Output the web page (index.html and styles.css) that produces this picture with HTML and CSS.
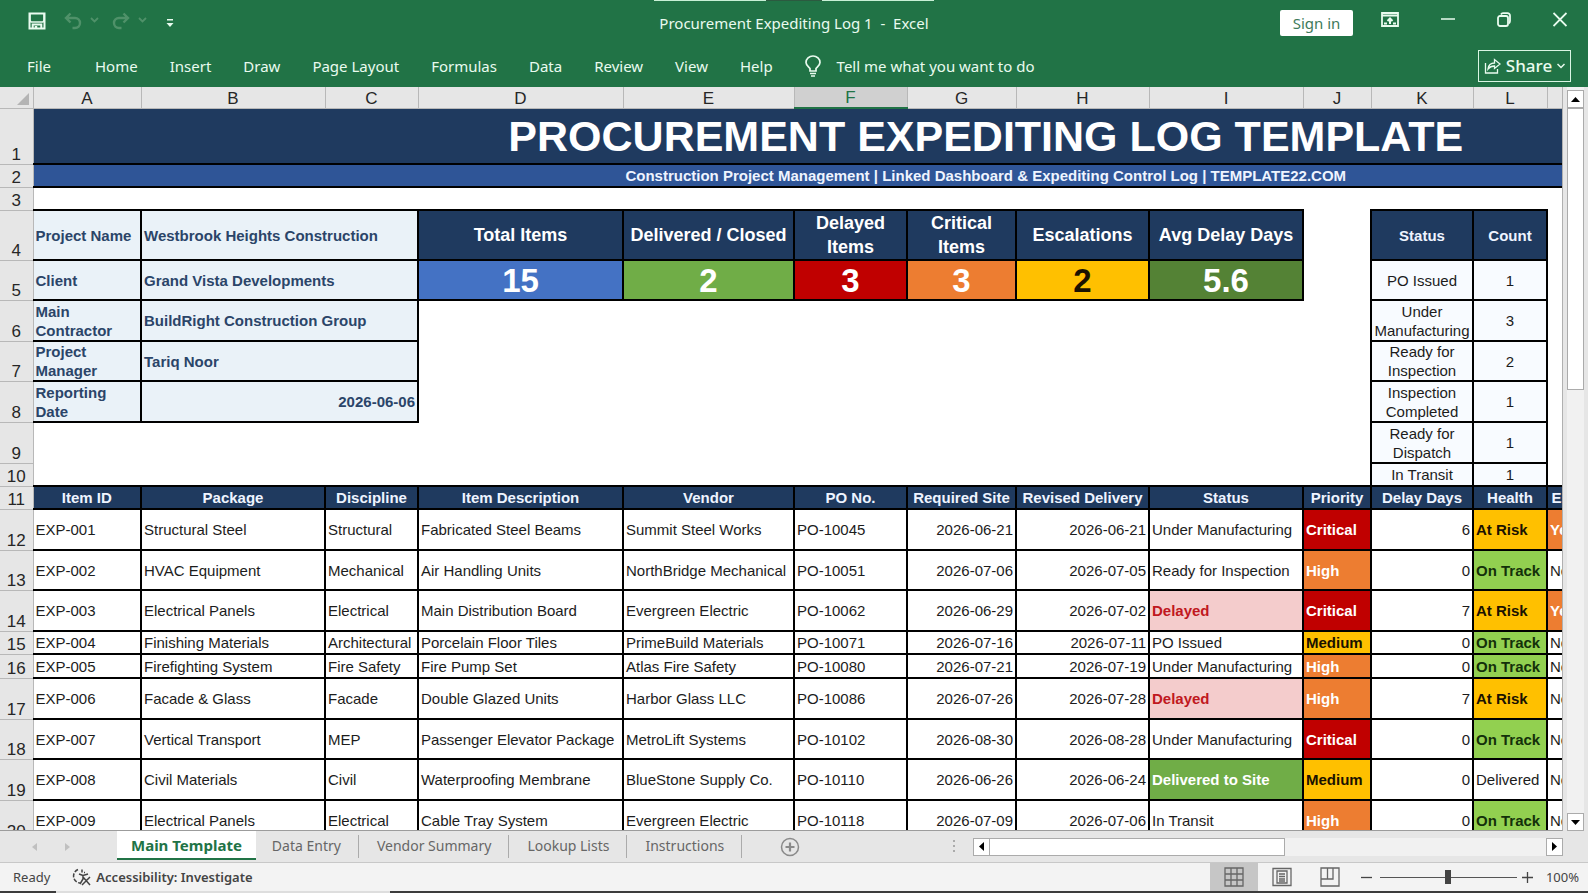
FILE: index.html
```
<!DOCTYPE html>
<html lang="en">
<head>
<meta charset="utf-8">
<title>Procurement Expediting Log 1 - Excel</title>
<link rel="stylesheet" href="styles.css">
</head>
<body>
<div class="app">
  <header class="ribbon">
    <div class="peek"></div>
    <div class="titlebar">
      <div class="quick">
        <button class="icon-btn" aria-label="Save"><svg width="18" height="18" viewBox="0 0 18 18" fill="none" stroke="currentColor" stroke-width="2"><path d="M1.500 1.500h15v15h-15z"/><path d="M2 2v6.500l1 1.500h12l1-1.500V2" stroke-width="1.500"/><path d="M4.700 17v-4.500h8.600V17" stroke-width="2"/><path d="M8 14v3" stroke-width="2.500"/></svg></button>
        <button class="icon-btn faded undo" aria-label="Undo"><svg width="36" height="18" viewBox="0 0 36 18" fill="none" stroke="currentColor" stroke-width="2.400"><path d="M6.500 1.500 2 6l4.500 4.500M2.500 6H11a5 5 0 0 1 0 10H8.500"/><path d="m27 6 3.500 3.500L34 6" stroke-width="1.800"/></svg></button>
        <button class="icon-btn faded" aria-label="Redo"><svg width="36" height="18" viewBox="0 0 36 18" fill="none" stroke="currentColor" stroke-width="2.400"><path d="M11.500 1.500 16 6l-4.500 4.500M15.500 6H7a5 5 0 0 0 0 10h2.500"/><path d="m27 6 3.500 3.500L34 6" stroke-width="1.800"/></svg></button>
        <button class="icon-btn more" aria-label="Customize Quick Access Toolbar"><svg width="8" height="10" viewBox="0 0 8 10" fill="currentColor"><path d="M1 1h6v1.500H1zM0.500 5h7L4 9z"/></svg></button>
      </div>
      <div class="doc-title">Procurement Expediting Log 1&nbsp; - &nbsp;Excel</div>
      <div class="window-tools">
        <button class="signin">Sign in</button>
        <button class="icon-btn" aria-label="Ribbon display options"><svg width="18" height="15" viewBox="0 0 18 15" fill="none" stroke="currentColor" stroke-width="1.800"><path d="M1 1h16v13H1zM1 3.500h16"/><path d="M9 12V7M6.500 9 9 6.500 11.500 9M3 11.500h3M12 11.500h3" stroke-width="2"/></svg></button>
        <button class="icon-btn" aria-label="Minimize"><svg width="14" height="15" viewBox="0 0 14 15" stroke="currentColor" stroke-width="1.500"><path d="M0 7h14"/></svg></button>
        <button class="icon-btn" aria-label="Restore"><svg width="14" height="15" viewBox="0 0 14 15" fill="none" stroke="currentColor" stroke-width="1.800"><rect x="1" y="4" width="10" height="10" rx="2"/><path d="M4 2.500C4.500 1.500 5 1.200 6 1.200h4.500a2.500 2.500 0 0 1 2.500 2.500V9c0 1-.5 2-1.300 2.300"/></svg></button>
        <button class="icon-btn" aria-label="Close"><svg width="14" height="15" viewBox="0 0 14 15" stroke="currentColor" stroke-width="1.800"><path d="m.5 1 13 13M13.500 1l-13 13"/></svg></button>
      </div>
    </div>
    <nav class="menu">
      <button class="file">File</button><button>Home</button><button>Insert</button><button>Draw</button><button>Page Layout</button><button>Formulas</button><button>Data</button><button>Review</button><button>View</button><button>Help</button>
      <button class="tell"><svg width="16" height="22" viewBox="0 0 16 22" fill="none" stroke="currentColor" stroke-width="1.700"><path d="M5 16v-2.500C4 12 1 10.500 1 7.500a7 6.500 0 0 1 14 0c0 3-3 4.500-4 6V16z"/><path d="M5 18.500h6M6 21h4"/></svg>Tell me what you want to do</button>
      <button class="share"><svg width="17" height="17" viewBox="0 0 17 17" fill="none" stroke="currentColor" stroke-width="1.300"><path d="M1.500 6v10h12v-4"/><path d="M4 12c.5-4 3-6 6.500-6V2.500L16 7l-5.500 4.500V9C8 9 6 9.500 4 12z"/></svg><span>Share</span><svg width="8" height="6" viewBox="0 0 8 6" fill="none" stroke="currentColor" stroke-width="1.500"><path d="m.5 1 3.500 3.500L7.500 1"/></svg></button>
    </nav>
  </header>

  <main class="workspace">
    <div class="sheet">
      <table class="grid">
        <colgroup><col class="c-row"><col class="c-a"><col class="c-b"><col class="c-c"><col class="c-d"><col class="c-e"><col class="c-f"><col class="c-g"><col class="c-h"><col class="c-i"><col class="c-j"><col class="c-k"><col class="c-l"><col class="c-m"><col class="c-n"></colgroup>
        <thead>
          <tr class="letters"><th class="corner"><svg width="12" height="12" viewBox="0 0 12 12" fill="#b4b4b4"><path d="M12 0v12H0z"/></svg></th><th>A</th><th>B</th><th>C</th><th>D</th><th>E</th><th class="active">F</th><th>G</th><th>H</th><th>I</th><th>J</th><th>K</th><th>L</th><th></th><th></th></tr>
        </thead>
        <tbody>
          <tr class="h-title"><th>1</th><td class="bx title" colspan="14">PROCUREMENT EXPEDITING LOG TEMPLATE</td></tr>
          <tr class="h-s"><th>2</th><td class="bx subtitle" colspan="14">Construction Project Management | Linked Dashboard &amp; Expediting Control Log | TEMPLATE22.COM</td></tr>
          <tr class="h-s"><th>3</th><td colspan="14"></td></tr>
          <tr class="h-kpi"><th>4</th><td class="bx info">Project Name</td><td class="bx info" colspan="2">Westbrook Heights Construction</td><td class="bx kpi">Total Items</td><td class="bx kpi">Delivered / Closed</td><td class="bx kpi">Delayed Items</td><td class="bx kpi">Critical Items</td><td class="bx kpi">Escalations</td><td class="bx kpi">Avg Delay Days</td><td></td><td class="bx head">Status</td><td class="bx head">Count</td><td colspan="2"></td></tr>
          <tr class="h-m"><th>5</th><td class="bx info">Client</td><td class="bx info" colspan="2">Grand Vista Developments</td><td class="bx val blue">15</td><td class="bx val green">2</td><td class="bx val red">3</td><td class="bx val orange">3</td><td class="bx val amber">2</td><td class="bx val forest">5.6</td><td></td><td class="bx count">PO Issued</td><td class="bx count">1</td><td colspan="2"></td></tr>
          <tr class="h-l"><th>6</th><td class="bx info">Main Contractor</td><td class="bx info" colspan="2">BuildRight Construction Group</td><td colspan="7"></td><td class="bx count">Under Manufacturing</td><td class="bx count">3</td><td colspan="2"></td></tr>
          <tr class="h-m"><th>7</th><td class="bx info">Project Manager</td><td class="bx info" colspan="2">Tariq Noor</td><td colspan="7"></td><td class="bx count">Ready for Inspection</td><td class="bx count">2</td><td colspan="2"></td></tr>
          <tr class="h-l"><th>8</th><td class="bx info">Reporting Date</td><td class="bx info num" colspan="2">2026-06-06</td><td colspan="7"></td><td class="bx count">Inspection Completed</td><td class="bx count">1</td><td colspan="2"></td></tr>
          <tr class="h-l"><th>9</th><td colspan="10"></td><td class="bx count">Ready for Dispatch</td><td class="bx count">1</td><td colspan="2"></td></tr>
          <tr class="h-s"><th>10</th><td colspan="10"></td><td class="bx count">In Transit</td><td class="bx count">1</td><td colspan="2"></td></tr>
          <tr class="h-s"><th>11</th><td class="bx head">Item ID</td><td class="bx head">Package</td><td class="bx head">Discipline</td><td class="bx head">Item Description</td><td class="bx head">Vendor</td><td class="bx head">PO No.</td><td class="bx head">Required Site</td><td class="bx head">Revised Delivery</td><td class="bx head">Status</td><td class="bx head">Priority</td><td class="bx head">Delay Days</td><td class="bx head">Health</td><td class="bx head">Escalation</td><td class="bx head"></td></tr>
          <tr class="h-l"><th>12</th><td class="bx">EXP-001</td><td class="bx">Structural Steel</td><td class="bx">Structural</td><td class="bx">Fabricated Steel Beams</td><td class="bx">Summit Steel Works</td><td class="bx">PO-10045</td><td class="bx num">2026-06-21</td><td class="bx num">2026-06-21</td><td class="bx">Under Manufacturing</td><td class="bx tag red">Critical</td><td class="bx num">6</td><td class="bx tag amber">At Risk</td><td class="bx tag orange">Yes</td><td class="bx"></td></tr>
          <tr class="h-m"><th>13</th><td class="bx">EXP-002</td><td class="bx">HVAC Equipment</td><td class="bx">Mechanical</td><td class="bx">Air Handling Units</td><td class="bx">NorthBridge Mechanical</td><td class="bx">PO-10051</td><td class="bx num">2026-07-06</td><td class="bx num">2026-07-05</td><td class="bx">Ready for Inspection</td><td class="bx tag orange">High</td><td class="bx num">0</td><td class="bx tag lime">On Track</td><td class="bx">No</td><td class="bx"></td></tr>
          <tr class="h-l"><th>14</th><td class="bx">EXP-003</td><td class="bx">Electrical Panels</td><td class="bx">Electrical</td><td class="bx">Main Distribution Board</td><td class="bx">Evergreen Electric</td><td class="bx">PO-10062</td><td class="bx num">2026-06-29</td><td class="bx num">2026-07-02</td><td class="bx tag pink">Delayed</td><td class="bx tag red">Critical</td><td class="bx num">7</td><td class="bx tag amber">At Risk</td><td class="bx tag orange">Yes</td><td class="bx"></td></tr>
          <tr class="h-s"><th>15</th><td class="bx">EXP-004</td><td class="bx">Finishing Materials</td><td class="bx">Architectural</td><td class="bx">Porcelain Floor Tiles</td><td class="bx">PrimeBuild Materials</td><td class="bx">PO-10071</td><td class="bx num">2026-07-16</td><td class="bx num">2026-07-11</td><td class="bx">PO Issued</td><td class="bx tag amber">Medium</td><td class="bx num">0</td><td class="bx tag lime">On Track</td><td class="bx">No</td><td class="bx"></td></tr>
          <tr class="h-s2"><th>16</th><td class="bx">EXP-005</td><td class="bx">Firefighting System</td><td class="bx">Fire Safety</td><td class="bx">Fire Pump Set</td><td class="bx">Atlas Fire Safety</td><td class="bx">PO-10080</td><td class="bx num">2026-07-21</td><td class="bx num">2026-07-19</td><td class="bx">Under Manufacturing</td><td class="bx tag orange">High</td><td class="bx num">0</td><td class="bx tag lime">On Track</td><td class="bx">No</td><td class="bx"></td></tr>
          <tr class="h-l"><th>17</th><td class="bx">EXP-006</td><td class="bx">Facade &amp; Glass</td><td class="bx">Facade</td><td class="bx">Double Glazed Units</td><td class="bx">Harbor Glass LLC</td><td class="bx">PO-10086</td><td class="bx num">2026-07-26</td><td class="bx num">2026-07-28</td><td class="bx tag pink">Delayed</td><td class="bx tag orange">High</td><td class="bx num">7</td><td class="bx tag amber">At Risk</td><td class="bx">No</td><td class="bx"></td></tr>
          <tr class="h-m"><th>18</th><td class="bx">EXP-007</td><td class="bx">Vertical Transport</td><td class="bx">MEP</td><td class="bx">Passenger Elevator Package</td><td class="bx">MetroLift Systems</td><td class="bx">PO-10102</td><td class="bx num">2026-08-30</td><td class="bx num">2026-08-28</td><td class="bx">Under Manufacturing</td><td class="bx tag red">Critical</td><td class="bx num">0</td><td class="bx tag lime">On Track</td><td class="bx">No</td><td class="bx"></td></tr>
          <tr class="h-l"><th>19</th><td class="bx">EXP-008</td><td class="bx">Civil Materials</td><td class="bx">Civil</td><td class="bx">Waterproofing Membrane</td><td class="bx">BlueStone Supply Co.</td><td class="bx">PO-10110</td><td class="bx num">2026-06-26</td><td class="bx num">2026-06-24</td><td class="bx tag green">Delivered to Site</td><td class="bx tag amber">Medium</td><td class="bx num">0</td><td class="bx">Delivered</td><td class="bx">No</td><td class="bx"></td></tr>
          <tr class="h-l"><th>20</th><td class="bx">EXP-009</td><td class="bx">Electrical Panels</td><td class="bx">Electrical</td><td class="bx">Cable Tray System</td><td class="bx">Evergreen Electric</td><td class="bx">PO-10118</td><td class="bx num">2026-07-09</td><td class="bx num">2026-07-06</td><td class="bx">In Transit</td><td class="bx tag orange">High</td><td class="bx num">0</td><td class="bx tag lime">On Track</td><td class="bx">No</td><td class="bx"></td></tr>
        </tbody>
      </table>
    </div>
    <div class="vscroll">
      <button class="sb" aria-label="Scroll up"><svg width="9" height="5" viewBox="0 0 9 5"><path d="M0 5h9L4.500 0z"/></svg></button>
      <div class="vthumb"></div>
      <button class="sb" aria-label="Scroll down"><svg width="9" height="5" viewBox="0 0 9 5"><path d="M0 0h9L4.500 5z"/></svg></button>
    </div>
  </main>

  <div class="tabbar">
    <div class="tabnav">
      <button aria-label="Previous sheet"><svg width="5" height="8" viewBox="0 0 5 8"><path d="M5 0v8L0 4z"/></svg></button>
      <button aria-label="Next sheet"><svg width="5" height="8" viewBox="0 0 5 8"><path d="M0 0v8l5-4z"/></svg></button>
    </div>
    <button class="tab current">Main Template</button><button class="tab">Data Entry</button><button class="tab">Vendor Summary</button><button class="tab">Lookup Lists</button><button class="tab">Instructions</button>
    <button class="add" aria-label="New sheet"><svg width="20" height="20" viewBox="0 0 20 20" fill="none" stroke="#8a8a8a"><circle cx="10" cy="10" r="8.500" stroke-width="1.500"/><path d="M10 5.500v9M5.500 10h9" stroke-width="2.200"/></svg></button>
    <div class="hzone">
      <svg class="dots" width="3" height="13" viewBox="0 0 3 13" fill="#ababab"><path d="M0 0h2v2H0zM0 5h2v2H0zM0 10h2v2H0z"/></svg>
      <div class="hscroll">
        <button class="sb" aria-label="Scroll left"><svg width="5" height="9" viewBox="0 0 5 9"><path d="M5 0v9L0 4.500z"/></svg></button>
        <div class="hthumb"></div>
        <button class="sb last" aria-label="Scroll right"><svg width="5" height="9" viewBox="0 0 5 9"><path d="M0 0v9l5-4.500z"/></svg></button>
      </div>
    </div>
  </div>

  <footer class="status">
    <span class="ready">Ready</span>
    <button class="access"><svg width="20" height="18" viewBox="0 0 20 18" fill="none" stroke="currentColor" stroke-width="1.500"><path d="M6 1.500A7 7 0 0 0 8 15" stroke-dasharray="4 1.500"/><path d="M10 1.500v3M7 6l4 1.500L16 6M11 7.500V11l-3 5M12 4.500h1M11 9l7 8M18 9l-8 8" /></svg>Accessibility: Investigate</button>
    <div class="views">
      <button class="view on" aria-label="Normal"><svg width="20" height="20" viewBox="0 0 20 20" fill="none" stroke="#666" stroke-width="1.300"><path d="M1 1h18v18H1zM7 1v18M13 1v18M1 7h18M1 13h18"/></svg></button>
      <button class="view" aria-label="Page Layout"><svg width="20" height="20" viewBox="0 0 20 20" fill="none" stroke="#666" stroke-width="1.300"><path d="M1 1.500h18v17H1zM5 4h10v12H5zM7 7h6M7 9.500h6M7 12h6M7 14h6"/></svg></button>
      <button class="view" aria-label="Page Break Preview"><svg width="20" height="20" viewBox="0 0 20 20" fill="none" stroke="#666" stroke-width="1.300"><path d="M1 1h18v18H1zM7.500 1v11M13 1v11H1"/></svg></button>
    </div>
    <div class="zoom">
      <button aria-label="Zoom out"><svg width="11" height="11" viewBox="0 0 11 11" stroke="#444" stroke-width="1.300"><path d="M0 5.500h11"/></svg></button>
      <input type="range" min="0" max="100" value="50" aria-label="Zoom">
      <button aria-label="Zoom in"><svg width="11" height="11" viewBox="0 0 11 11" stroke="#444" stroke-width="1.300"><path d="M0 5.500h11M5.500 0v11"/></svg></button>
      <span class="pct">100%</span>
    </div>
  </footer>
  <div class="taskline"></div>
</div>
</body>
</html>
```
FILE: styles.css
```
* { box-sizing: border-box; }
body { margin: 0; font-family: "Noto Sans", "Open Sans", sans-serif; }
button { margin: 0; padding: 0; border: 0; background: none; color: inherit; font: inherit; white-space: nowrap; }
svg { display: block; flex: none; }

.app { display: flex; flex-direction: column; height: 100vh; overflow: hidden; background: #e6e6e6; }

/* Ribbon */
.ribbon { position: relative; flex: none; background: #217346; color: #e9fbef; }
.peek { position: absolute; top: 0; left: calc(50% - 140px); width: 280px; height: 1px; background: linear-gradient(90deg, #c8f0d6 0 40%, #2c5a40 40% 60%, #c8f0d6 60%); }
.titlebar { display: grid; grid-template-columns: 1fr auto 1fr; align-items: center; height: 46px; }
.quick { display: flex; align-items: center; padding-left: 28px; padding-bottom: 4px; }
.icon-btn { display: block; }
.faded { color: #4f9169; margin-right: 12px; }
.undo { margin-left: 18px; }
.more { margin-top: 4px; margin-left: 6px; }
.doc-title { font-size: 15px; line-height: 20px; }
.window-tools { display: flex; justify-content: flex-end; align-items: center; gap: 42px; padding-right: 21px; padding-bottom: 8px; }
.signin { width: 73px; height: 26px; margin-right: -14px; margin-top: 8px; background: #fff; border-radius: 2px; color: #3d7a5a; font-size: 15px; }
.menu { display: flex; align-items: center; gap: 32px; height: 41px; padding: 0 17px 2px 27px; font-size: 15px; }
.file { margin-right: 12px; }
.tell { display: flex; align-items: center; gap: 16px; }
.share { display: flex; align-items: center; justify-content: center; gap: 5px; margin-left: auto; width: 93px; height: 32px; border: 1px solid #d9f5e3; font-size: 17px; font-weight: 500; }

/* Worksheet */
.workspace { display: flex; flex: 1; min-height: 0; }
.sheet { flex: 1; min-width: 0; overflow: hidden; background: #fff; border-right: 1px solid #b0b0b0; border-bottom: 1px solid #9c9c9c; }
.grid { width: 1939px; border-collapse: collapse; table-layout: fixed; font-family: "Liberation Sans", Arial, sans-serif; font-size: 15px; line-height: 19px; color: #1c1c1c; }
.c-row { width: 33px; } .c-a { width: 108px; } .c-b { width: 184px; } .c-c { width: 93px; }
.c-d { width: 205px; } .c-e { width: 171px; } .c-f { width: 113px; } .c-g { width: 109px; }
.c-h { width: 133px; } .c-i { width: 154px; } .c-j { width: 68px; } .c-k { width: 102px; }
.c-l { width: 74px; } .c-m { width: 84px; } .c-n { width: 308px; }

.grid th { padding: 0; background: #e6e6e6; border: 1px solid #b8b8b8; border-left: 0; font-size: 17px; font-weight: 400; line-height: 19px; vertical-align: bottom; color: #262626; }
.letters { height: 21px; }
.letters th { border-top: 0; }
.grid .corner { padding-right: 4px; padding-bottom: 3px; }
.corner svg { margin-left: auto; }
.grid .active { background: #d0d0d0; color: #217346; border-bottom: 2px solid #217346; }

.h-title { height: 56px; }
.h-s { height: 23px; }
.h-s2 { height: 24px; }
.h-kpi { height: 50px; }
.h-m { height: 40px; }
.h-l { height: 41px; }

.grid td { padding: 0 2px; vertical-align: middle; overflow: hidden; }
.grid .bx { border: 2px solid #000; }
.grid .bx:nth-child(2) { border-left: 0; }
.grid .title { border-top: 0; background: #1f3a5f; color: #fff; font-size: 43px; font-weight: 700; line-height: 48px; text-align: center; }
.grid .subtitle { background: #2f5597; color: #eef4ff; font-weight: 700; text-align: center; }
.info { background: #eaf2f8; color: #2b4569; font-weight: 700; }
.grid .kpi { background: #1f3a5f; color: #fff; font-size: 18px; font-weight: 700; line-height: 24px; text-align: center; }
.head { background: #1f3a5f; color: #eef4ff; font-weight: 700; text-align: center; white-space: nowrap; }
.grid .val { padding-top: 2px; font-size: 33px; font-weight: 700; line-height: 36px; text-align: center; }
.grid .count { padding: 0; background: #f8fbff; text-align: center; }
.num { text-align: right; }
.tag { font-weight: 700; white-space: nowrap; }
.blue { background: #4472c4; color: #fff; }
.green { background: #70ad47; color: #fff; }
.red { background: #c00000; color: #fff; }
.orange { background: #ed7d31; color: #fff; }
.amber { background: #ffc000; color: #1a1200; }
.forest { background: #548235; color: #fff; }
.lime { background: #92d050; color: #14300a; }
.pink { background: #f4cccc; color: #c01820; }

/* Scroll bars */
.sb { display: flex; align-items: center; justify-content: center; flex: none; width: 17px; height: 18px; background: #fff; border: 1px solid #ababab; color: #222; }
.vscroll { display: flex; flex-direction: column; flex: none; width: 25px; padding: 3px 4px 0 4px; background: linear-gradient(90deg, #e6e6e6 4px, #f1f1f1 4px 21px, #e6e6e6 21px); }
.vthumb { height: 38%; margin-bottom: auto; background: #fff; border: 1px solid #ababab; }

/* Sheet tabs */
.tabbar { display: flex; align-items: stretch; flex: none; height: 32px; padding-right: 25px; border-bottom: 1px solid #c8c8c8; color: #666; font-size: 14px; }
.tabnav { display: flex; align-items: center; gap: 28px; width: 117px; padding-left: 32px; }
.tabnav svg { fill: #c0c0c0; }
.tab { position: relative; height: 29px; padding: 0 18px; }
.tab::after { content: ""; position: absolute; right: 0; top: 4px; bottom: 2px; width: 1px; background: #ababab; }
.current { padding: 0 14px; margin-right: -2px; background: #fff; border-bottom: 2px solid #217346; color: #217346; font-size: 15px; font-weight: 700; }
.current::after { content: none; }
.add { margin-left: 38px; align-self: center; }
.hzone { display: flex; align-items: center; gap: 17px; margin-left: auto; width: 39%; }
.hscroll { display: flex; flex: 1; height: 18px; background: #f1f1f1; }
.hthumb { width: 50%; background: #fff; border: 1px solid #ababab; border-left: 0; }
.last { margin-left: auto; }

/* Status bar */
.status { display: flex; align-items: center; flex: none; height: 28px; padding: 0 9px 0 13px; background: #f3f3f3; color: #444; font-size: 13px; }
.access { display: flex; align-items: center; gap: 4px; margin-left: 22px; font-weight: 600; }
.views { display: flex; align-self: stretch; margin-left: auto; }
.view { display: flex; align-items: center; justify-content: center; width: 48px; }
.on { background: #c6c6c6; }
.zoom { display: flex; align-items: center; margin-left: 7px; }
.zoom input { appearance: none; width: 137px; height: 16px; margin: 0 5px 0 8px; background: linear-gradient(#555, #555) center / 100% 1px no-repeat; }
.zoom input::-webkit-slider-thumb { appearance: none; width: 6px; height: 14px; background: #444; }
.pct { margin-left: 13px; }
.taskline { flex: none; height: 2px; background: linear-gradient(90deg, #3c3c3c 56px, #dedede 56px 390px, #3c3c3c 390px); }
```
